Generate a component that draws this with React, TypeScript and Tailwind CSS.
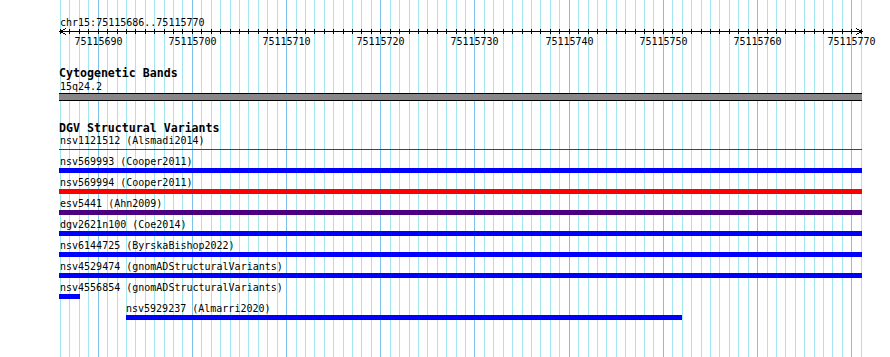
import React from "react";

const VIEW_START = 75115686;
const VIEW_END = 75115770;
const BP_PX = 9.42;
const ORIGIN = 60;

const bx = (i: number) => ORIGIN + i * BP_PX;
const nBases = VIEW_END - VIEW_START + 1;

type Feature = {
  name: string;
  source: string;
  left: number; // px from track start (x=59)
  width: number;
  color: string;
  thin?: boolean;
};

const features: Feature[] = [
  { name: "nsv1121512", source: "Alsmadi2014", left: 0, width: 803, color: "#e00000", thin: true },
  { name: "nsv569993", source: "Cooper2011", left: 0, width: 803, color: "#0000ff" },
  { name: "nsv569994", source: "Cooper2011", left: 0, width: 803, color: "#ff0000" },
  { name: "esv5441", source: "Ahn2009", left: 0, width: 803, color: "#4b0082" },
  { name: "dgv2621n100", source: "Coe2014", left: 0, width: 803, color: "#0000ff" },
  { name: "nsv6144725", source: "ByrskaBishop2022", left: 0, width: 803, color: "#0000ff" },
  { name: "nsv4529474", source: "gnomADStructuralVariants", left: 0, width: 803, color: "#0000ff" },
  { name: "nsv4556854", source: "gnomADStructuralVariants", left: 0, width: 21, color: "#0000ff" },
  { name: "nsv5929237", source: "Almarri2020", left: 67, width: 556, color: "#0000ff" },
];

function Gridlines() {
  const lines = [];
  for (let i = 0; i <= nBases; i++) {
    const major = (VIEW_START + i) % 10 === 0;
    const x = Math.round(bx(i)) + 0.5;
    lines.push(
      <line key={i} x1={x} x2={x} y1={0} y2={357} stroke={major ? "#7cc2ec" : "#a4e6f0"} strokeWidth={1} />
    );
  }
  return (
    <svg className="absolute inset-0" width={890} height={357} shapeRendering="crispEdges">
      {lines}
    </svg>
  );
}

function Ruler() {
  const ticks = [];
  for (let i = 0; i <= nBases; i++) {
    const x = Math.round(bx(i)) + 0.5;
    ticks.push(<line key={i} x1={x} x2={x} y1={2} y2={7} stroke="#000" strokeWidth={1} />);
  }
  const left = Math.round(bx(0));
  const right = Math.round(bx(nBases));
  return (
    <svg width={890} height={9} className="block" shapeRendering="crispEdges">
      <line x1={left} x2={right + 1} y1={4.5} y2={4.5} stroke="#000" strokeWidth={1} />
      {ticks}
      <polyline points={`${left + 6},1.5 ${left + 0.5},4.5 ${left + 6},7.5`} fill="none" stroke="#000" strokeWidth={1} />
      <polyline points={`${right - 5},1.5 ${right + 0.5},4.5 ${right - 5},7.5`} fill="none" stroke="#000" strokeWidth={1} />
    </svg>
  );
}

function RulerLabels() {
  const labels = [];
  for (let i = 0; i <= nBases; i++) {
    const pos = VIEW_START + i;
    if (pos % 10 !== 0) continue;
    labels.push(
      <span key={pos} className="absolute top-0 -translate-x-1/2" style={{ left: Math.round(bx(i)) + 0.5 }}>
        {pos}
      </span>
    );
  }
  return <div className="relative h-[10px] text-[10px] leading-[12px]">{labels}</div>;
}

export default function App() {
  return (
    <div className="relative w-[890px] h-[357px] overflow-hidden bg-white text-black font-['DejaVu_Sans_Mono',monospace]">
      <Gridlines />
      <div className="relative pt-[17px]">
        <div className="pl-[60px] h-[10px] text-[10px] leading-[12px]">
          chr15:{VIEW_START}..{VIEW_END}
        </div>
        <Ruler />
        <RulerLabels />

        {/* Cytogenetic Bands */}
        <div className="mt-[21px] pl-[59px] h-[12px] text-[11.6px] leading-[13px] font-bold">Cytogenetic Bands</div>
        <div className="mt-[2px] pl-[60px] h-[10px] text-[10px] leading-[12px]">15q24.2</div>
        <div className="mt-[2px] ml-[59px] w-[803px] h-[8px] border-y border-black bg-[#888688]" />

        {/* DGV Structural Variants */}
        <div className="mt-[21px] pl-[59px] h-[12px] text-[11.6px] leading-[13px] font-bold">DGV Structural Variants</div>
        <div className="mt-[1px] pl-[59px] flex flex-col">
          {features.map((f) => (
            <div key={f.name} className="flex flex-col h-[21px]">
              <div className="h-[10px] text-[10px] leading-[12px] whitespace-nowrap" style={{ paddingLeft: Math.max(f.left, 1) }}>
                {f.name} ({f.source})
              </div>
              <div className="mt-[2px] h-[5px] flex items-center">
                <div
                  className={f.thin ? "h-[1px]" : "h-[5px]"}
                  style={{ marginLeft: f.left, width: f.width, backgroundColor: f.color }}
                />
              </div>
            </div>
          ))}
        </div>
      </div>
    </div>
  );
}
